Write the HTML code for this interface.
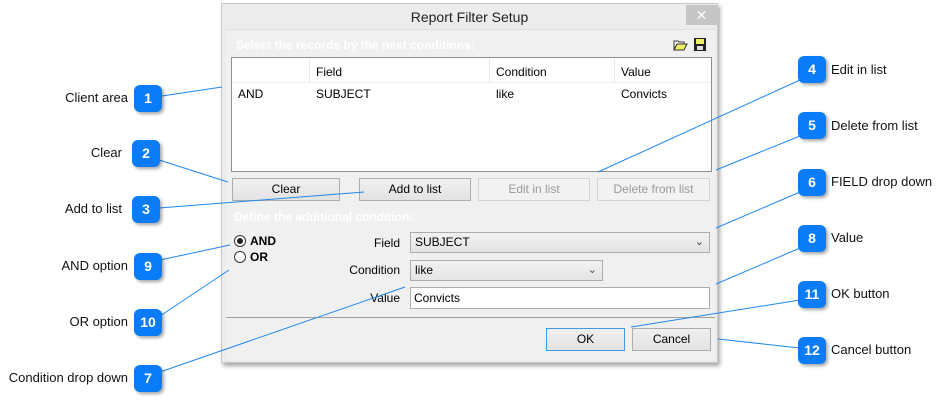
<!DOCTYPE html>
<html><head><meta charset="utf-8"><style>
*{margin:0;padding:0;box-sizing:border-box}
body{width:946px;height:402px;background:#fff;position:relative;overflow:hidden;font-family:"Liberation Sans",Tahoma,sans-serif;font-size:12px;color:#000}
.a{position:absolute}
.dlg{left:221px;top:3px;width:497px;height:360px;background:#ececec;border:1px solid #c9c9c9;box-shadow:2px 3px 4px rgba(0,0,0,.35)}
.title{left:0;top:0;width:495px;height:26px;text-align:center;font-size:14px;line-height:26px;color:#222}
.close{left:464px;top:1px;width:31px;height:20px;background:#c6c6c6;color:#fff;text-align:center;line-height:20px;font-size:14px}
.panel{left:4px;top:25px;width:489px;height:331px;background:#f0f0f0;border-top:1px solid #e0e0e0}
.hdr{color:#fff;font-weight:bold;font-size:12px}
.grid{left:231px;top:57px;width:481px;height:115px;background:#fff;border:1px solid #8e8f8f}
.btn{height:23px;border:1px solid #adadad;background:linear-gradient(#f0f0f0,#e3e3e3);text-align:center;line-height:21px;font-size:12px}
.dis{color:#9a9a9a;border-color:#d4d4d4;background:#f2f2f2}
.cb{height:21px;border:1px solid #acacac;background:linear-gradient(#f2f2f2,#e4e4e4);line-height:19px;padding-left:4px}
.cb span{position:absolute;right:5px;top:0;font-size:11px;color:#444}
.badge{width:28px;height:27px;border-radius:6px;background:#0a7cf7;color:#fff;font-weight:bold;font-size:14px;text-align:center;line-height:27px;box-shadow:2px 2px 3px rgba(0,0,0,.35)}
.lbl{font-size:13px;color:#111;line-height:16px}
.r{text-align:right;width:200px}
</style></head><body>
<div class="a dlg">
<div class="a title">Report Filter Setup</div>
<div class="a close">✕</div>
<div class="a panel"></div>
</div>
<div class="a hdr" style="left:236px;top:38px">Select the records by the next conditions:</div>
<svg class="a" style="left:672px;top:37px" width="34" height="16"><path d="M2 4h4l1 1h5v2H5l-3 6z" fill="#fff" stroke="#333"/><path d="M2 13l3-6h10l-3 6z" fill="#ee6" stroke="#333"/><rect x="22" y="1" width="12" height="13" fill="#222"/><rect x="24" y="2" width="8" height="5" fill="#ee6"/><rect x="25" y="9" width="6" height="4" fill="#ddd"/></svg>
<div class="a grid">
<div class="a" style="left:0;top:0;width:479px;height:25px;border-bottom:1px solid #eaf0f7"></div>
<div class="a" style="left:77px;top:0;height:25px;border-left:1px solid #e3ebf5"></div>
<div class="a" style="left:257px;top:0;height:25px;border-left:1px solid #e3ebf5"></div>
<div class="a" style="left:382px;top:0;height:25px;border-left:1px solid #e3ebf5"></div>
<div class="a" style="left:84px;top:7px">Field</div><div class="a" style="left:264px;top:7px">Condition</div><div class="a" style="left:389px;top:7px">Value</div>
<div class="a" style="left:6px;top:29px">AND</div><div class="a" style="left:84px;top:29px">SUBJECT</div><div class="a" style="left:264px;top:29px">like</div><div class="a" style="left:389px;top:29px">Convicts</div>
</div>
<div class="a btn" style="left:232px;top:178px;width:108px">Clear</div>
<div class="a btn" style="left:359px;top:178px;width:112px">Add to list</div>
<div class="a btn dis" style="left:478px;top:178px;width:112px">Edit in list</div>
<div class="a btn dis" style="left:597px;top:178px;width:113px">Delete from list</div>
<div class="a hdr" style="left:234px;top:210px">Define the additional condition:</div>
<svg class="a" style="left:233px;top:234px" width="14" height="30"><circle cx="7" cy="7" r="5.5" fill="#fff" stroke="#333"/><circle cx="7" cy="7" r="3" fill="#222"/><circle cx="7" cy="23" r="5.5" fill="#fff" stroke="#333"/></svg>
<div class="a" style="left:250px;top:234px;font-weight:bold">AND</div>
<div class="a" style="left:250px;top:250px;font-weight:bold">OR</div>
<div class="a" style="left:300px;top:236px;width:100px;text-align:right">Field</div>
<div class="a" style="left:300px;top:263px;width:100px;text-align:right">Condition</div>
<div class="a" style="left:300px;top:291px;width:100px;text-align:right">Value</div>
<div class="a cb" style="left:410px;top:232px;width:300px">SUBJECT<span>⌄</span></div>
<div class="a cb" style="left:410px;top:260px;width:193px">like<span>⌄</span></div>
<div class="a" style="left:410px;top:287px;width:300px;height:22px;background:#fff;border:1px solid #acacac;line-height:20px;padding-left:3px">Convicts</div>
<div class="a" style="left:226px;top:317px;width:489px;border-top:1px solid #a0a0a0"></div>
<div class="a btn" style="left:546px;top:328px;width:79px;border-color:#3c9ae8">OK</div>
<div class="a btn" style="left:632px;top:328px;width:79px">Cancel</div>
<svg class="a" style="left:0;top:0" width="946" height="402"><g stroke="#1e88f0" stroke-width="1" fill="none">
<line x1="162" y1="96" x2="222" y2="87"/><line x1="159" y1="160" x2="228" y2="182"/><line x1="159" y1="208" x2="364" y2="192"/>
<line x1="800" y1="80" x2="598" y2="172"/><line x1="800" y1="136" x2="716" y2="170"/><line x1="800" y1="192" x2="716" y2="228"/>
<line x1="160" y1="372" x2="405" y2="287"/><line x1="800" y1="248" x2="716" y2="284"/><line x1="160" y1="260" x2="230" y2="245"/>
<line x1="160" y1="316" x2="229" y2="270"/><line x1="800" y1="300" x2="631" y2="327"/><line x1="800" y1="348" x2="718" y2="339"/></g></svg>
<div class="a badge" style="left:134px;top:85px">1</div>
<div class="a badge" style="left:132px;top:140px">2</div>
<div class="a badge" style="left:132px;top:196px">3</div>
<div class="a badge" style="left:798px;top:56px">4</div>
<div class="a badge" style="left:798px;top:112px">5</div>
<div class="a badge" style="left:798px;top:169px">6</div>
<div class="a badge" style="left:134px;top:365px">7</div>
<div class="a badge" style="left:798px;top:225px">8</div>
<div class="a badge" style="left:134px;top:253px">9</div>
<div class="a badge" style="left:134px;top:309px">10</div>
<div class="a badge" style="left:798px;top:281px">11</div>
<div class="a badge" style="left:798px;top:337px">12</div>
<div class="a lbl r" style="left:-72px;top:90px">Client area</div>
<div class="a lbl r" style="left:-78px;top:145px">Clear</div>
<div class="a lbl r" style="left:-78px;top:201px">Add to list</div>
<div class="a lbl r" style="left:-72px;top:258px">AND option</div>
<div class="a lbl r" style="left:-72px;top:314px">OR option</div>
<div class="a lbl r" style="left:-72px;top:370px">Condition drop down</div>
<div class="a lbl" style="left:831px;top:62px">Edit in list</div>
<div class="a lbl" style="left:831px;top:118px">Delete from list</div>
<div class="a lbl" style="left:831px;top:174px">FIELD drop down</div>
<div class="a lbl" style="left:831px;top:230px">Value</div>
<div class="a lbl" style="left:831px;top:286px">OK button</div>
<div class="a lbl" style="left:831px;top:342px">Cancel button</div>
</body></html>
